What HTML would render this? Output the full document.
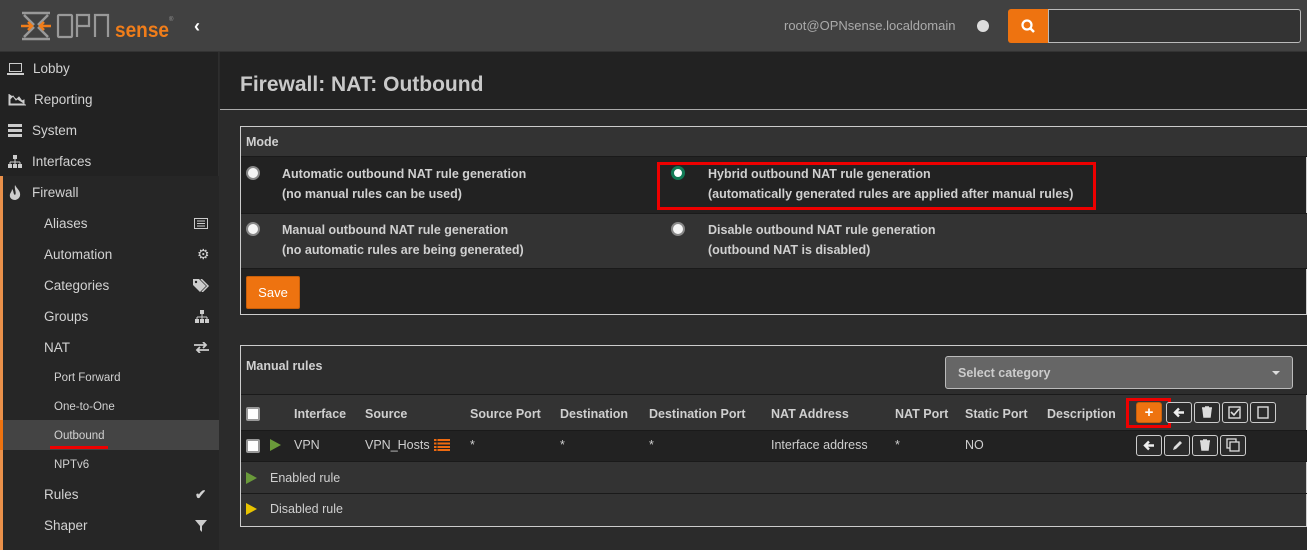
<!DOCTYPE html>
<html><head><meta charset="utf-8"><style>
*{box-sizing:border-box;margin:0;padding:0}
body{width:1307px;height:550px;overflow:hidden;background:#2b2b2b;font-family:"Liberation Sans",sans-serif;color:#cfcfcf;position:relative}
.a{position:absolute}
.hdr{left:0;top:0;width:1307px;height:52px;background:#414141;border-bottom:1px solid #333}
.side{left:0;top:52px;width:219px;height:498px;background:#222;border-right:1px solid #2e2e2e}
.si{position:absolute;left:0;width:219px;font-size:13.5px;color:#d2d2d2}
.b{font-weight:bold;font-size:12.5px;color:#d0d0d0}
.r{position:absolute;width:14px;height:14px;border-radius:50%;background:#f5f5f5;border:2px solid #888}
.btn{position:absolute;width:26px;height:21px;border:1px solid #ccc;border-radius:3px;background:#2b2b2b}
.th{position:absolute;top:407px;font-weight:bold;font-size:12.5px;color:#cfcfcf}
.td{position:absolute;top:438px;font-size:12.5px;color:#cfcfcf}
</style></head><body>
<div class="a hdr"></div>
<svg class="a" style="left:20px;top:10px" width="155" height="32" viewBox="0 0 155 32">
<g fill="none" stroke="#999" stroke-width="2.5"><path d="M2 3h28M2 29h28M4 5l10 10M28 5l-10 10M4 27l10-10M28 27l-10-10"/></g>
<path d="M1 16h10M8 12l4 4-4 4M31 16h-10M24 12l-4 4 4 4" stroke="#f07d1a" stroke-width="2.5" fill="none"/>
<g fill="none" stroke="#999" stroke-width="2.2">
<rect x="38" y="5" width="14" height="22" rx="1"/>
<path d="M57 27V5h12v11H57"/>
<path d="M75 27V5h13v22"/>
</g>
<text x="95" y="27" font-family="Liberation Sans" font-weight="bold" font-size="21" fill="#f07d1a" textLength="54" lengthAdjust="spacingAndGlyphs">sense</text>
<text x="149" y="11" font-family="Liberation Sans" font-size="6" fill="#999">®</text>
</svg>
<div class="a" style="left:194px;top:16px;font-size:18px;font-weight:bold;color:#fff">&#8249;</div>
<div class="a" style="left:784px;top:18px;font-size:13px;color:#aaa">root@OPNsense.localdomain</div>
<div class="a" style="left:977px;top:20px;width:12px;height:12px;border-radius:50%;background:#ddd"></div>
<div class="a" style="left:1008px;top:9px;width:40px;height:34px;background:#ee7310;border-radius:3px 0 0 3px"></div>
<svg class="a" style="left:1020px;top:18px" width="16" height="16"><circle cx="7" cy="7" r="4.5" stroke="#fff" stroke-width="2.2" fill="none"/><path d="M10 10l4 4" stroke="#fff" stroke-width="2.5"/></svg>
<div class="a" style="left:1048px;top:9px;width:253px;height:34px;background:#333;border:1px solid #bbb;border-radius:0 3px 3px 0"></div>

<div class="a side"></div>
<div class="a" style="left:0;top:176px;width:219px;height:374px;background:#262626"></div>
<div class="a" style="left:0;top:176px;width:3px;height:374px;background:#e9904a"></div>
<div class="a" style="left:0;top:420px;width:219px;height:30px;background:#444"></div>
<div class="a" style="left:0;top:420px;width:3px;height:30px;background:#ee7310"></div>
<div class="a" style="left:50px;top:446px;width:58px;height:3px;background:#e00"></div>
<div class="si" style="top:61px"><span style="position:absolute;left:9px;top:2px;width:13px;height:9px;border:1.5px solid #ccc"></span><span style="position:absolute;left:7px;top:12px;width:17px;height:1.5px;background:#ccc"></span><span style="position:absolute;left:33px">Lobby</span></div>
<div class="si" style="top:92px"><svg style="position:absolute;left:8px;top:2px" width="18" height="12"><path d="M1 0v11h17M2 10V5l3-3 3 4 3-3 3 4 2-1v4z" fill="#ccc" stroke="#ccc"/></svg><span style="position:absolute;left:34px">Reporting</span></div>
<div class="si" style="top:123px"><svg style="position:absolute;left:8px;top:1px" width="14" height="13"><rect y="0" width="14" height="3" fill="#ccc"/><rect y="5" width="14" height="3" fill="#ccc"/><rect y="10" width="14" height="3" fill="#ccc"/></svg><span style="position:absolute;left:32px">System</span></div>
<div class="si" style="top:154px"><svg style="position:absolute;left:8px;top:1px" width="14" height="13"><rect x="5" y="0" width="4" height="4" fill="#ccc"/><path d="M7 4v3M2 7h10M2 7v2M12 7v2M7 7v2" stroke="#ccc"/><rect x="0" y="9" width="4" height="4" fill="#ccc"/><rect x="5" y="9" width="4" height="4" fill="#ccc"/><rect x="10" y="9" width="4" height="4" fill="#ccc"/></svg><span style="position:absolute;left:32px">Interfaces</span></div>
<div class="si" style="top:185px"><svg style="position:absolute;left:9px;top:0" width="12" height="15"><path d="M6 0C8 4 12 6 11 11 10 14 7 15 6 15 3 15 0 13 1 9 2 7 3 6 3 4 5 6 4 9 6 10 8 8 5 4 6 0z" fill="#ccc"/></svg><span style="position:absolute;left:32px">Firewall</span></div>
<div class="si" style="top:216px"><span style="position:absolute;left:44px">Aliases</span><svg style="position:absolute;left:194px;top:2px" width="14" height="11"><rect x=".5" y=".5" width="13" height="10" fill="none" stroke="#ccc"/><path d="M3 3h8M3 5.5h8M3 8h8" stroke="#ccc"/></svg></div>
<div class="si" style="top:247px"><span style="position:absolute;left:44px">Automation</span><span style="position:absolute;left:197px;top:-1px;font-size:14px">&#9881;</span></div>
<div class="si" style="top:278px"><span style="position:absolute;left:44px">Categories</span><svg style="position:absolute;left:193px;top:1px" width="17" height="13"><path d="M0 0h6l7 7-6 6-7-7z" fill="#ccc"/><path d="M8 0l7 7-6 6" stroke="#ccc" stroke-width="1.5" fill="none"/><circle cx="3" cy="3" r="1.2" fill="#222"/></svg></div>
<div class="si" style="top:309px"><span style="position:absolute;left:44px">Groups</span><svg style="position:absolute;left:195px;top:1px" width="14" height="13"><rect x="5" y="0" width="4" height="4" fill="#ccc"/><path d="M7 4v3M2 7h10M2 7v2M12 7v2M7 7v2" stroke="#ccc"/><rect x="0" y="9" width="4" height="4" fill="#ccc"/><rect x="5" y="9" width="4" height="4" fill="#ccc"/><rect x="10" y="9" width="4" height="4" fill="#ccc"/></svg></div>
<div class="si" style="top:340px"><span style="position:absolute;left:44px">NAT</span><svg style="position:absolute;left:194px;top:2px" width="15" height="11"><path d="M0 3h12M9 0l3 3-3 3M15 8H3M6 5L3 8l3 3" stroke="#ccc" stroke-width="1.8" fill="none"/></svg></div>
<div class="si" style="top:372px;font-size:11.5px"><span style="position:absolute;left:54px">Port Forward</span></div>
<div class="si" style="top:401px;font-size:11.5px"><span style="position:absolute;left:54px">One-to-One</span></div>
<div class="si" style="top:430px;font-size:11.5px"><span style="position:absolute;left:54px">Outbound</span></div>
<div class="si" style="top:459px;font-size:11.5px"><span style="position:absolute;left:54px">NPTv6</span></div>
<div class="si" style="top:487px"><span style="position:absolute;left:44px">Rules</span><span style="position:absolute;left:195px;font-weight:bold">&#10004;</span></div>
<div class="si" style="top:518px"><span style="position:absolute;left:44px">Shaper</span><svg style="position:absolute;left:195px;top:2px" width="12" height="12"><path d="M0 0h12L7 6v6L5 10V6z" fill="#ccc"/></svg></div>

<div class="a" style="left:220px;top:52px;width:1087px;height:58px;background:#222;border-bottom:1px solid #aaa"></div>
<div class="a" style="left:240px;top:73px;font-size:21px;font-weight:bold;color:#c9c9c9">Firewall: NAT: Outbound</div>

<div class="a" style="left:240px;top:126px;width:1067px;height:189px;border:1px solid #ccc;background:#222"></div>
<div class="a" style="left:241px;top:127px;width:1066px;height:30px;background:#333;border-bottom:1px solid #1a1a1a"></div>
<div class="a b" style="left:246px;top:135px">Mode</div>
<div class="a" style="left:241px;top:213px;width:1066px;height:56px;background:#333;border-top:1px solid #1a1a1a;border-bottom:1px solid #1a1a1a"></div>
<div class="r" style="left:246px;top:166px"></div>
<div class="a b" style="left:282px;top:164px;line-height:20px">Automatic outbound NAT rule generation<br>(no manual rules can be used)</div>
<div class="r" style="left:671px;top:166px;background:#fff;border:3px solid #117a55"></div>
<div class="a" style="left:657px;top:162px;width:439px;height:48px;border:3px solid #e00"></div>
<div class="a b" style="left:708px;top:164px;line-height:20px">Hybrid outbound NAT rule generation<br>(automatically generated rules are applied after manual rules)</div>
<div class="r" style="left:246px;top:222px"></div>
<div class="a b" style="left:282px;top:220px;line-height:20px">Manual outbound NAT rule generation<br>(no automatic rules are being generated)</div>
<div class="r" style="left:671px;top:222px"></div>
<div class="a b" style="left:708px;top:220px;line-height:20px">Disable outbound NAT rule generation<br>(outbound NAT is disabled)</div>
<div class="a" style="left:246px;top:276px;width:54px;height:33px;background:#ee7310;border:1px solid #c85f0a;border-radius:2px;color:#fff;font-size:13px;text-align:center;line-height:31px">Save</div>

<div class="a" style="left:240px;top:345px;width:1067px;height:182px;border:1px solid #ccc;background:#333"></div>
<div class="a" style="left:241px;top:346px;width:1066px;height:49px;background:#2d2d2d;border-bottom:1px solid #1a1a1a"></div>
<div class="a b" style="left:246px;top:359px">Manual rules</div>
<div class="a" style="left:945px;top:356px;width:348px;height:33px;background:#666;border:1px solid #bbb;border-radius:3px"></div>
<div class="a b" style="left:958px;top:366px;color:#ccc">Select category</div>
<div class="a" style="left:1272px;top:371px;border:4px solid transparent;border-top:4px solid #ddd"></div>
<div class="a" style="left:241px;top:430px;width:1066px;height:32px;background:#222;border-top:1px solid #1a1a1a;border-bottom:1px solid #1a1a1a"></div>
<div class="a" style="left:241px;top:493px;width:1066px;height:1px;background:#1a1a1a"></div>
<div class="a" style="left:246px;top:407px;width:14px;height:14px;background:#fff;border:2px solid #999;border-radius:2px"></div>
<div class="th" style="left:294px">Interface</div><div class="th" style="left:365px">Source</div><div class="th" style="left:470px">Source Port</div><div class="th" style="left:560px">Destination</div><div class="th" style="left:649px">Destination Port</div><div class="th" style="left:771px">NAT Address</div><div class="th" style="left:895px">NAT Port</div><div class="th" style="left:965px">Static Port</div><div class="th" style="left:1047px">Description</div>
<div class="a" style="left:1126px;top:398px;width:45px;height:30px;border:3px solid #e00"></div>
<div class="btn" style="left:1136px;top:402px;background:#ee7310;border-color:#c85f0a;color:#fff;font-weight:bold;text-align:center;line-height:19px;font-size:15px">+</div>
<div class="btn" style="left:1166px;top:402px"><svg width="24" height="19"><path d="M17 9.5H9M12 5.5l-4 4 4 4" stroke="#eee" stroke-width="2.4" fill="none"/></svg></div>
<div class="btn" style="left:1194px;top:402px"><svg width="24" height="19"><path d="M8 6h8l-1 8H9zM7 5h10M10 4h4" stroke="#ddd" stroke-width="1.5" fill="#ddd"/></svg></div>
<div class="btn" style="left:1222px;top:402px"><svg width="24" height="19"><rect x="6" y="4" width="11" height="11" fill="none" stroke="#ddd" stroke-width="1.4"/><path d="M8 9l3 3 5-6" stroke="#ddd" stroke-width="1.6" fill="none"/></svg></div>
<div class="btn" style="left:1250px;top:402px"><svg width="24" height="19"><rect x="7" y="4" width="10" height="11" fill="none" stroke="#ddd" stroke-width="1.4"/></svg></div>

<div class="a" style="left:246px;top:439px;width:14px;height:14px;background:#fff;border:2px solid #999;border-radius:2px"></div>
<div class="a" style="left:270px;top:439px;border-left:11px solid #6a9a3a;border-top:6px solid transparent;border-bottom:6px solid transparent"></div>
<div class="td" style="left:294px">VPN</div><div class="td" style="left:365px">VPN_Hosts</div>
<svg class="a" style="left:434px;top:439px" width="16" height="12"><path d="M0 1h16M0 4.5h16M0 8h16M0 11h16" stroke="#ee6a10" stroke-width="2"/><path d="M3 0v12" stroke="#222" stroke-width="1"/></svg>
<div class="td" style="left:470px">*</div><div class="td" style="left:560px">*</div><div class="td" style="left:649px">*</div><div class="td" style="left:771px">Interface address</div><div class="td" style="left:895px">*</div><div class="td" style="left:965px">NO</div>
<div class="btn" style="left:1136px;top:435px"><svg width="24" height="19"><path d="M17 9.5H9M12 5.5l-4 4 4 4" stroke="#eee" stroke-width="2.4" fill="none"/></svg></div>
<div class="btn" style="left:1164px;top:435px"><svg width="24" height="19"><path d="M8 14l1-3 6-6 2 2-6 6z" fill="#ddd"/></svg></div>
<div class="btn" style="left:1192px;top:435px"><svg width="24" height="19"><path d="M8 6h8l-1 8H9zM7 5h10M10 4h4" stroke="#ddd" stroke-width="1.5" fill="#ddd"/></svg></div>
<div class="btn" style="left:1220px;top:435px"><svg width="24" height="19"><rect x="6" y="3" width="9" height="9" fill="none" stroke="#ddd" stroke-width="1.3"/><rect x="9" y="6" width="9" height="9" fill="#2b2b2b" stroke="#ddd" stroke-width="1.3"/></svg></div>

<div class="a" style="left:246px;top:472px;border-left:11px solid #6a9a3a;border-top:6px solid transparent;border-bottom:6px solid transparent"></div>
<div class="a" style="left:270px;top:471px;font-size:12.5px">Enabled rule</div>
<div class="a" style="left:246px;top:503px;border-left:11px solid #e8c400;border-top:6px solid transparent;border-bottom:6px solid transparent"></div>
<div class="a" style="left:270px;top:502px;font-size:12.5px">Disabled rule</div>
</body></html>
